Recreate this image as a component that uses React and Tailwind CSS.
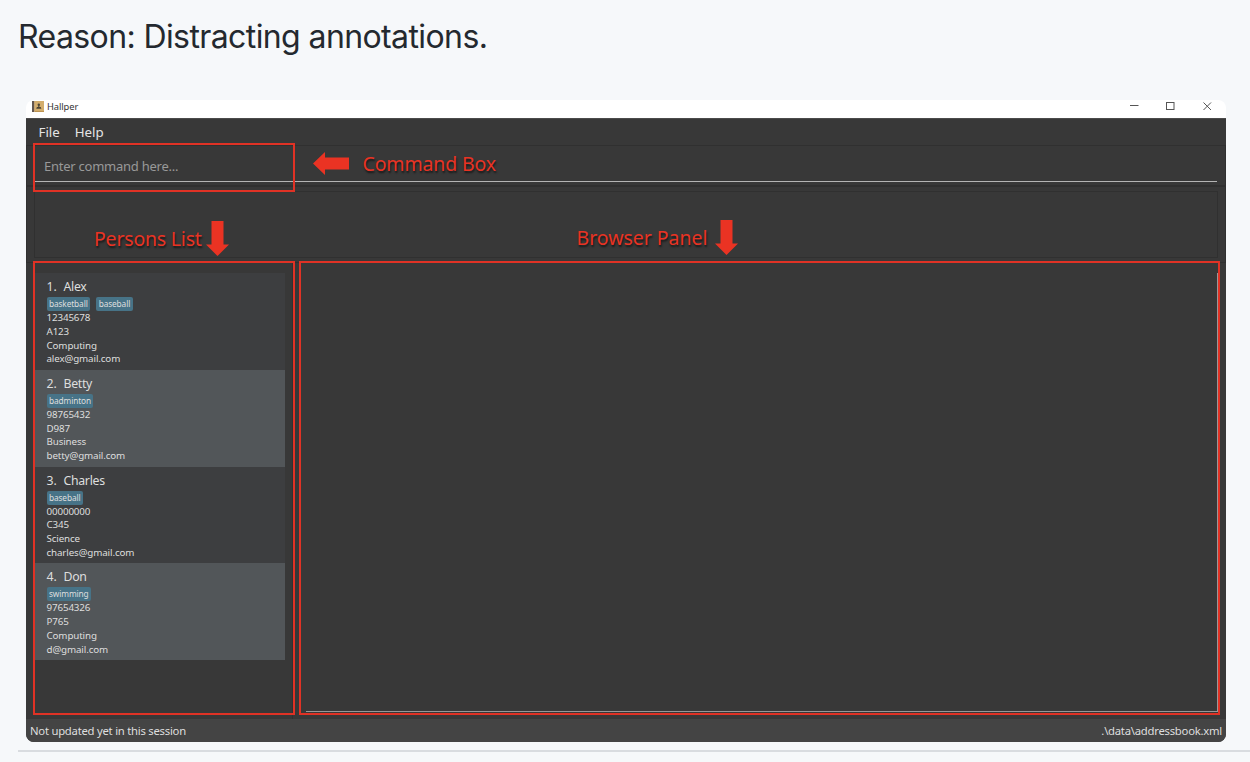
import React from "react";

const persons = [
  { name: "Alex", tags: ["basketball", "baseball"], details: ["12345678", "A123", "Computing", "alex@gmail.com"] },
  { name: "Betty", tags: ["badminton"], details: ["98765432", "D987", "Business", "betty@gmail.com"] },
  { name: "Charles", tags: ["baseball"], details: ["00000000", "C345", "Science", "charles@gmail.com"] },
  { name: "Don", tags: ["swimming"], details: ["97654326", "P765", "Computing", "d@gmail.com"] },
];

function AppIcon() {
  return (
    <svg className="h-[11px] w-[12px]" viewBox="0 0 12 11">
      <rect x="0" y="0" width="12" height="11" fill="#d3ad6c" />
      <rect x="0" y="0" width="2" height="11" fill="#62564f" />
      <rect x="2" y="0" width="1" height="11" fill="#c4a473" />
      <rect x="3" y="10" width="9" height="1" fill="#bd9350" />
      <circle cx="6.800" cy="3.700" r="1.200" fill="#4c4436" />
      <path d="M6.200 4.500h1.200v1.400h1.300l.7 1.900H4.200l.7-1.900h1.300z" fill="#4c4436" />
    </svg>
  );
}

function TitleBar() {
  return (
    <div className="flex h-[18px] shrink-0 items-start justify-between bg-white pl-[6px]">
      <div className="flex items-center gap-[3px] pt-[1px]">
        <AppIcon />
        <span className="text-[9.3px] leading-[11px] tracking-[-0.080px] text-[#333]">Hallper</span>
      </div>
      <svg className="h-[14px] w-[100px]" viewBox="0 0 100 14" fill="none" stroke="#555" strokeWidth="1">
        <path d="M4 5.500h8.500" />
        <rect x="40.500" y="2.500" width="7.500" height="7" />
        <path d="M77.500 2.500l7.500 7.500M85 2.500l-7.500 7.500" />
      </svg>
    </div>
  );
}

function PersonCard({ index, person }) {
  const shade = index % 2 === 0 ? "bg-[#3d3e40]" : "bg-[#525659]";
  return (
    <div className={"flex h-[96.800px] w-[250px] flex-col pl-[11.500px] pt-[5px] text-[#dedede] " + shade}>
      <div className="flex h-[18px] items-start text-[12.300px] leading-[17px]">
        <span className="w-[17px]">{index + 1}.</span>
        <span className="tracking-[-0.300px]">{person.name}</span>
      </div>
      <div className="flex h-[15px] items-center gap-[6px] pt-px">
        {person.tags.map((tag) => (
          <span key={tag} className="flex h-[14px] items-center rounded-[2px] bg-[#477387] px-[2.500px] text-[8.300px] leading-[14px] tracking-[-0.120px]">
            {tag}
          </span>
        ))}
      </div>
      {person.details.map((line) => (
        <span key={line} className="h-[13.800px] text-[9.800px] leading-[13.800px] tracking-[-0.130px]">{line}</span>
      ))}
    </div>
  );
}

function Label({ className, children }) {
  return (
    <span className={"absolute whitespace-nowrap leading-[26px] text-[#e93323] [text-shadow:1px_2px_2px_rgba(0,0,0,0.600)] " + className}>
      {children}
    </span>
  );
}

function DownArrow({ className }) {
  return (
    <svg className={"absolute h-[35px] w-[23px] " + className} viewBox="0 0 23 35">
      <path d="M5.500 0h12v23.500H23L11.500 35 0 23.500h5.500z" fill="#ea3323" />
    </svg>
  );
}

function Annotations() {
  return (
    <div className="pointer-events-none absolute inset-0">
      <div className="absolute left-[7px] top-[43px] h-[49px] w-[262px] border-2 border-[#e03225]" />
      <div className="absolute left-[7px] top-[161px] h-[454px] w-[262px] border-2 border-[#e03225]" />
      <div className="absolute left-[273px] top-[161px] h-[454px] w-[921px] border-2 border-[#e03225]" />
      <svg className="absolute left-[287px] top-[52px] h-[23px] w-[36px]" viewBox="0 0 36 23">
        <path d="M0 11.500L12 0v5.500h24v12H12V23z" fill="#ea3323" />
      </svg>
      <Label className="left-[336.500px] top-[51px] text-[19.500px] tracking-[-0.150px]">Command Box</Label>
      <Label className="left-[68px] top-[126px] text-[19.500px] tracking-[-0.200px]">Persons List</Label>
      <DownArrow className="left-[179.500px] top-[121px]" />
      <Label className="left-[550.500px] top-[125px] text-[19.500px] tracking-[-0.030px]">Browser Panel</Label>
      <DownArrow className="left-[689px] top-[119.500px]" />
    </div>
  );
}

export default function App() {
  return (
    <div className="flex h-[762px] w-[1250px] flex-col overflow-hidden bg-[#f6f8fa]">
      <h1 className="h-[100px] shrink-0 pl-[18px] pt-[17px] font-['Inter',sans-serif] text-[32px] leading-[40px] tracking-[-0.600px] text-[#24292f]">
        Reason: Distracting annotations.
      </h1>
      <main className="relative ml-[26px] flex h-[642px] w-[1200px] shrink-0 flex-col overflow-hidden rounded-[8px] font-['Noto_Sans','Open_Sans',sans-serif]">
        <TitleBar />
        <div className="flex flex-1 flex-col bg-[#383838]">
          <nav className="flex h-[27px] shrink-0 items-center gap-[15px] border-t border-[#4b4b4b] pl-[12.500px] pt-px text-[13.300px] text-[#e4e4e4]">
            <span>File</span>
            <span>Help</span>
          </nav>
          <section className="flex h-[42px] shrink-0 flex-col border-x border-b-2 border-t border-[#303030] px-[8px]">
            <div className="flex h-[36px] items-center border-b border-[#b5b5b5] pl-[9px] pt-[6px] text-[13px] tracking-[-0.250px] text-[#999]">
              Enter command here...
            </div>
          </section>
          <section className="flex h-[76px] shrink-0 border-x border-b border-[#303030] px-[7px] pb-[4px] pt-[4px]">
            <div className="flex-1 border border-[#303030]" />
          </section>
          <section className="flex h-[456px] shrink-0">
            <div className="flex w-[267px] flex-col border-r border-[#313131] pl-[9px] pt-[10px]">
              {persons.map((person, i) => (
                <PersonCard key={person.name} index={i} person={person} />
              ))}
            </div>
            <div className="flex flex-1 pb-[7px] pl-[13px] pr-[8px] pt-[10px]">
              <div className="flex-1 border-b border-r border-[#999]" />
            </div>
          </section>
          <footer className="flex h-[23px] shrink-0 items-center justify-between bg-[#444] pl-[4px] pr-[4px] pt-px text-[11.300px] tracking-[-0.250px] text-[#dedede]">
            <span>Not updated yet in this session</span>
            <span>.\data\addressbook.xml</span>
          </footer>
        </div>
        <Annotations />
      </main>
      <hr className="ml-[18px] mt-[8px] border-t-2 border-[#d9dce0]" />
    </div>
  );
}
